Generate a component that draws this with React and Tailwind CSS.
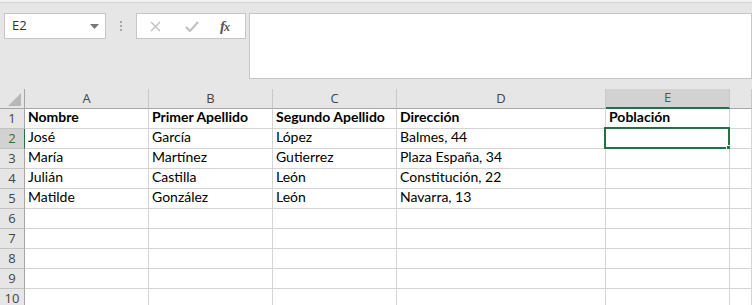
const cols = ["A", "B", "C", "D", "E", ""];

const rows = [
  { n: 1, cells: ["Nombre", "Primer Apellido", "Segundo Apellido", "Dirección", "Población", ""], bold: true },
  { n: 2, cells: ["José", "García", "López", "Balmes, 44", "", ""] },
  { n: 3, cells: ["María", "Martínez", "Gutierrez", "Plaza España, 34", "", ""] },
  { n: 4, cells: ["Julián", "Castilla", "León", "Constitución, 22", "", ""] },
  { n: 5, cells: ["Matilde", "González", "León", "Navarra, 13", "", ""] },
  { n: 6, cells: ["", "", "", "", "", ""] },
  { n: 7, cells: ["", "", "", "", "", ""] },
  { n: 8, cells: ["", "", "", "", "", ""] },
  { n: 9, cells: ["", "", "", "", "", ""] },
  { n: 10, cells: ["", "", "", "", "", ""] },
];

function FormulaBar() {
  return (
    <div className="bg-[#e6e6e6] h-[89px]">
      <div className="h-[3px] bg-[#f2f2f2] border-b border-[#d4d4d4]" />
      <div className="flex items-start pl-[4px] pt-[10px]">
        <div className="w-[102px] h-[26px] bg-white border border-[#c6c6c6] flex items-center justify-between pl-[7px] pr-[6px]">
          <span className="text-[13px] text-[#333] font-['Open_Sans',sans-serif]">E2</span>
          <svg width="9" height="5" viewBox="0 0 9 5">
            <path d="M0 0 L9 0 L4.5 5 Z" fill="#777" />
          </svg>
        </div>
        <div className="w-[30px] h-[26px] flex flex-col items-center justify-center gap-[2px]">
          <span className="w-[2px] h-[2px] bg-[#a8a8a8]" />
          <span className="w-[2px] h-[2px] bg-[#a8a8a8]" />
          <span className="w-[2px] h-[2px] bg-[#a8a8a8]" />
        </div>
        <div className="w-[110px] h-[26px] bg-white border border-[#c6c6c6] flex items-center pl-[13px]">
          <svg width="11" height="11" viewBox="0 0 11 11">
            <path d="M1 1 L10 10 M10 1 L1 10" stroke="#bfbfbf" strokeWidth="1.4" />
          </svg>
          <svg width="14" height="11" viewBox="0 0 14 11" className="ml-[24px]">
            <path d="M1 6 L5 10 L13 1" stroke="#bfbfbf" strokeWidth="2" fill="none" />
          </svg>
          <span className="ml-[21px] text-[15px] italic font-bold text-[#555] font-['Liberation_Serif',serif] leading-none tracking-[-1px]">
            f<span className="text-[12px]">x</span>
          </span>
        </div>
        <div className="ml-[3px] flex-1 h-[66px] bg-white border border-[#c6c6c6]" />
      </div>
    </div>
  );
}

function Sheet() {
  return (
    <div className="grid grid-cols-[25px_124px_124px_124px_209px_124px_1fr] font-['Lato',sans-serif] text-[14px] text-black">
      <div className="h-[20px] bg-[#e6e6e6] border-r border-b border-[#a6a6a6] flex items-end justify-end pr-[3px] pb-[2px]">
        <svg width="13" height="13" viewBox="0 0 13 13">
          <path d="M13 0 L13 13 L0 13 Z" fill="#b7b7b7" />
        </svg>
      </div>
      {cols.map((c, i) => {
        const sel = c === "E";
        return (
          <div
            key={i}
            className={
              sel
                ? "h-[20px] bg-[#d2d2d2] border-r border-[#c8c8c8] border-b-2 border-b-[#217346] flex items-center justify-center text-[13px] text-[#217346] font-['Open_Sans',sans-serif]"
                : "h-[20px] bg-[#e6e6e6] border-r border-[#c8c8c8] border-b border-b-[#a6a6a6] flex items-center justify-center text-[13px] text-[#444] font-['Open_Sans',sans-serif]"
            }
          >
            {c}
          </div>
        );
      })}
      {rows.map((r) => (
        <Row key={r.n} r={r} />
      ))}
    </div>
  );
}

function Row({ r }) {
  const selRow = r.n === 2;
  return (
    <>
      <div
        className={
          selRow
            ? "h-[20px] bg-[#d2d2d2] border-r border-r-[#217346] border-b border-b-[#c2c2c2] flex items-center justify-center text-[13px] text-[#217346] font-['Open_Sans',sans-serif]"
            : "h-[20px] bg-[#e6e6e6] border-r border-r-[#a6a6a6] border-b border-b-[#c2c2c2] flex items-center justify-center text-[13px] text-[#444] font-['Open_Sans',sans-serif]"
        }
      >
        {r.n}
      </div>
      {r.cells.map((v, i) => {
        const selected = selRow && i === 4;
        return (
          <div
            key={i}
            className={`relative h-[20px] bg-white border-r border-b border-[#d4d4d4] flex items-end pl-[3px] pb-[1px] whitespace-nowrap ${
              r.bold ? "font-bold" : ""
            }`}
          >
            {v}
            {selected && (
              <>
                <div className="absolute -left-[2px] -top-[2px] -right-px -bottom-px border-2 border-[#217346]" />
                <div className="absolute -right-[3px] -bottom-[3px] w-[6px] h-[6px] bg-[#217346] border border-white" />
              </>
            )}
          </div>
        );
      })}
    </>
  );
}

export default function App() {
  return (
    <div className="w-[752px] h-[305px] overflow-hidden bg-white">
      <FormulaBar />
      <Sheet />
    </div>
  );
}
